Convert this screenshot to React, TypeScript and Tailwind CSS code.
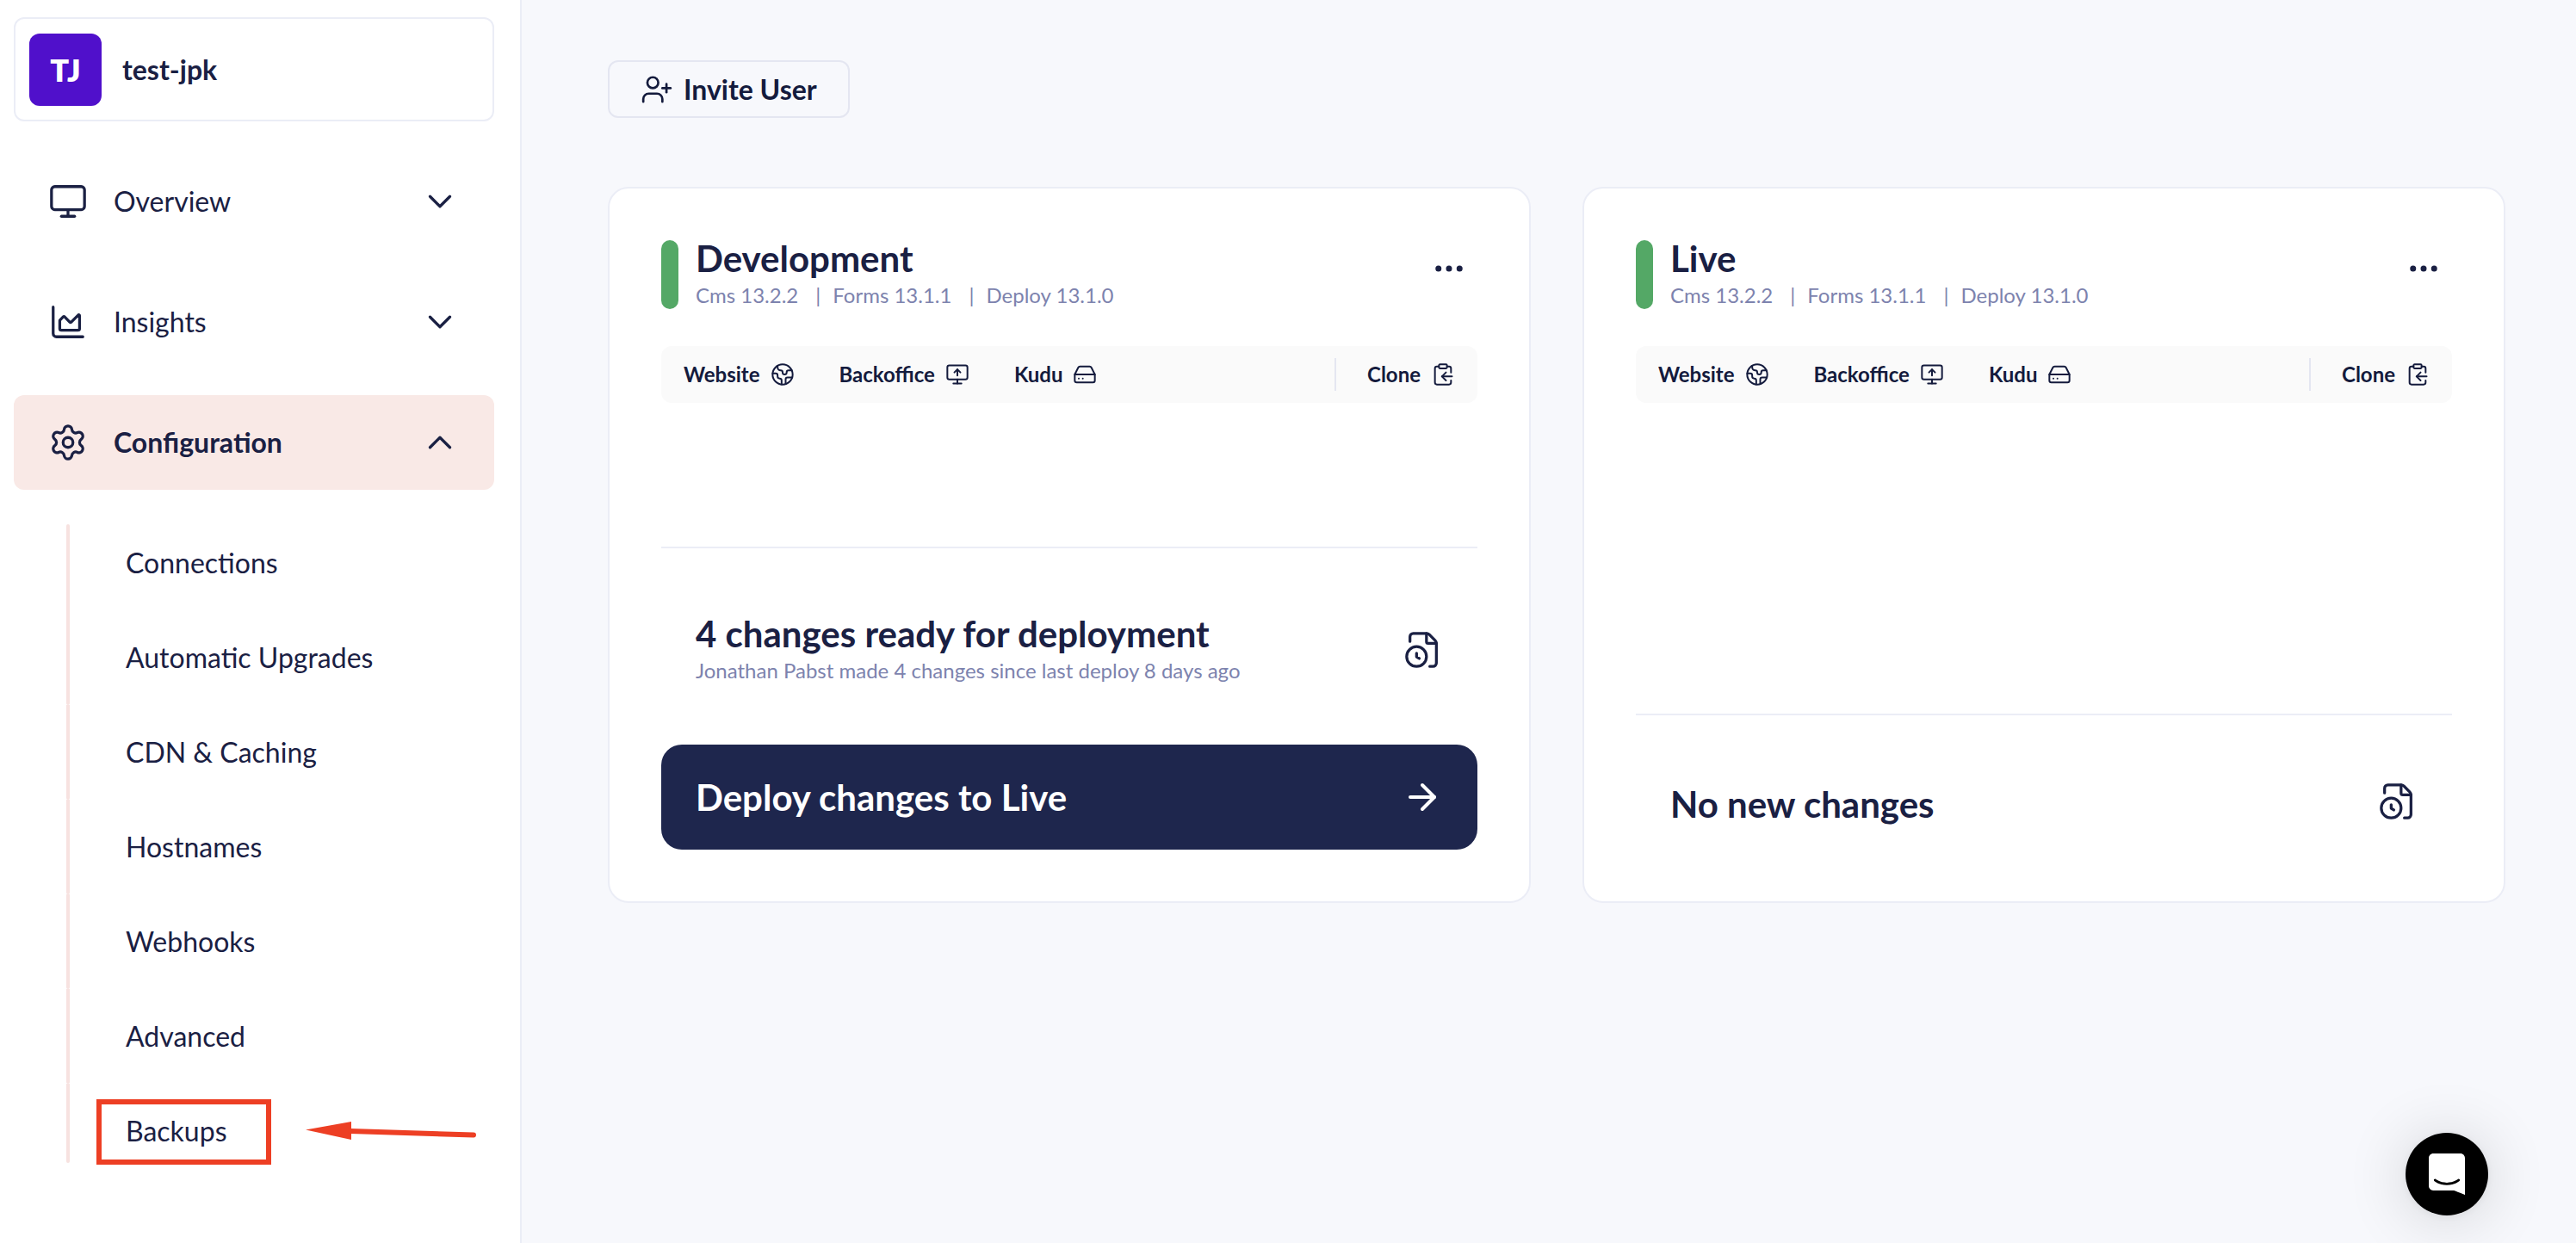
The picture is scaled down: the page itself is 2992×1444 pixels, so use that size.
import type { ReactNode } from "react";
import {
  ArrowRight,
  ChartArea,
  ChevronDown,
  ChevronUp,
  ClipboardCopy,
  Earth,
  Ellipsis,
  FileClock,
  HardDrive,
  Monitor,
  MonitorUp,
  Settings,
  UserPlus,
  type LucideIcon,
} from "lucide-react";

type Section = { label: string; icon: LucideIcon; open?: boolean };

const sections: Section[] = [
  { label: "Overview", icon: Monitor },
  { label: "Insights", icon: ChartArea },
  { label: "Configuration", icon: Settings, open: true },
];

const configLinks = [
  "Connections",
  "Automatic Upgrades",
  "CDN & Caching",
  "Hostnames",
  "Webhooks",
  "Advanced",
  "Backups",
];

function NavSection({ label, icon: Icon, open }: Section) {
  const Chevron = open ? ChevronUp : ChevronDown;
  return (
    <button
      type="button"
      aria-expanded={!!open}
      className={`flex h-[110px] w-full items-center gap-[30px] rounded-xl px-10 text-left ${
        open ? "bg-[#f9e9e6] font-bold" : ""
      }`}
    >
      <Icon size={46} strokeWidth={1.7} />
      <span className="flex-1">{label}</span>
      <Chevron size={46} strokeWidth={1.7} />
    </button>
  );
}

/* Red frame and arrow that point out the Backups entry. */
function BackupsCallout() {
  return (
    <>
      <span className="pointer-events-none absolute top-[18px] left-[35px] h-[76px] w-[203px] border-[6px] border-[#ed3f24]" />
      <svg
        viewBox="0 0 200 24"
        className="pointer-events-none absolute top-[43px] left-[278px] h-6 w-[200px]"
        aria-hidden="true"
      >
        <path d="M0 10.5 53 1V22z" fill="#ed3f24" />
        <path d="M52 12 195 16.500" stroke="#ed3f24" strokeWidth="6" strokeLinecap="round" />
      </svg>
    </>
  );
}

function Sidebar() {
  return (
    <aside className="w-[606px] shrink-0 border-r-2 border-[#ebedf6] bg-white pt-5 pr-[30px] pl-4">
      <div className="flex h-[121px] items-center gap-6 rounded-xl border-2 border-[#ebedf6] px-4">
        <div className="flex size-[84px] items-center justify-center rounded-xl bg-[#5010cb] text-4xl font-extrabold text-white">
          TJ
        </div>
        <span className="font-bold">test-jpk</span>
      </div>
      <nav className="mt-[38px] flex flex-col gap-[30px]">
        {sections.map((s) => (
          <NavSection key={s.label} {...s} />
        ))}
        <ul className="ml-[61px]">
          {configLinks.map((label) => (
            <li key={label} className="group relative flex h-[110px] items-center">
              <span className="w-1 self-stretch rounded-b-xs bg-[#f7e2e0] group-first:mt-[10px] group-first:rounded-t-xs group-first:rounded-b-none group-last:mb-[18px]" />
              <a href="#" className="pl-[65px]">
                {label}
              </a>
              {label === "Backups" && <BackupsCallout />}
            </li>
          ))}
        </ul>
      </nav>
    </aside>
  );
}

function ToolLink({ label, icon: Icon }: { label: string; icon: LucideIcon }) {
  return (
    <a href="#" className="flex items-center gap-3">
      {label}
      <Icon size={28} strokeWidth={1.7} />
    </a>
  );
}

function EnvironmentCard({ name, children }: { name: string; children: ReactNode }) {
  return (
    <section className="flex flex-col rounded-3xl border-2 border-[#ebedf6] bg-white p-[60px]">
      <header className="flex h-20 items-start">
        <span className="h-20 w-5 rounded-full bg-[#54a866]" />
        <div className="ml-5 flex-1">
          <h2 className="text-[42px] leading-[42px] font-bold">{name}</h2>
          <p className="flex text-2xl leading-[44px] text-[#7d83ae]">
            <span className="pr-5">Cms 13.2.2</span>
            <span className="pr-3.5">|</span>
            <span className="pr-5">Forms 13.1.1</span>
            <span className="pr-3.5">|</span>
            <span>Deploy 13.1.0</span>
          </p>
        </div>
        <button type="button" aria-label={`${name} options`} className="mt-3 mr-3">
          <Ellipsis size={42} strokeWidth={2} />
        </button>
      </header>
      <div className="mt-[43px] flex h-[66px] items-center gap-[52px] rounded-xl bg-[#fafafa] px-[26px] text-2xl font-bold text-[#141b3d]">
        <ToolLink label="Website" icon={Earth} />
        <ToolLink label="Backoffice" icon={MonitorUp} />
        <ToolLink label="Kudu" icon={HardDrive} />
        <div className="ml-auto flex h-[38px] items-center border-l-2 border-[#e4e6f1] pl-9">
          <button type="button" className="flex items-center gap-3">
            Clone
            <ClipboardCopy size={28} strokeWidth={1.7} />
          </button>
        </div>
      </div>
      <div className="min-h-[167px] flex-1" />
      {children}
    </section>
  );
}

function Changes({ title, detail }: { title: string; detail?: string }) {
  return (
    <div className="flex h-[86px] items-center justify-between px-10">
      <div>
        <h3 className="text-[42px] leading-[42px] font-bold">{title}</h3>
        {detail && <p className="text-2xl leading-[44px] text-[#7d83ae]">{detail}</p>}
      </div>
      <button type="button" aria-label="Change history" className="mb-1.5">
        <FileClock size={46} strokeWidth={1.7} />
      </button>
    </div>
  );
}

export default function App() {
  return (
    <div className="flex min-h-screen bg-[#f7f8fc] font-['Lato',sans-serif] text-[32px] leading-10 text-[#1a2043]">
      <Sidebar />
      <main className="flex-1 pt-[70px] pr-[82px] pl-[100px]">
        <button
          type="button"
          className="flex h-[67px] items-center gap-3 rounded-xl border-2 border-[#e4e6f1] px-9 font-bold text-[#141b3d]"
        >
          <UserPlus size={38} strokeWidth={1.7} />
          Invite User
        </button>
        <div className="mt-20 grid grid-cols-2 gap-[60px]">
          <EnvironmentCard name="Development">
            <div className="border-t-2 border-[#ebedf6] pt-[78px] pb-16">
              <Changes
                title="4 changes ready for deployment"
                detail="Jonathan Pabst made 4 changes since last deploy 8 days ago"
              />
            </div>
            <button
              type="button"
              className="flex h-[122px] items-center justify-between rounded-3xl bg-[#1e264d] px-10 text-[42px] font-bold text-white"
            >
              Deploy changes to Live
              <ArrowRight size={48} strokeWidth={2} />
            </button>
          </EnvironmentCard>
          <EnvironmentCard name="Live">
            <div className="border-t-2 border-[#ebedf6] pt-[60px] pb-2.5">
              <Changes title="No new changes" />
            </div>
          </EnvironmentCard>
        </div>
      </main>
      <button
        type="button"
        aria-label="Open chat"
        className="fixed right-[102px] bottom-8 flex size-24 items-center justify-center rounded-full bg-black shadow-[0_4px_72px_rgba(0,0,0,0.16),0_2px_12px_rgba(0,0,0,0.06)]"
      >
        <svg viewBox="0 0 28 32" className="h-12 w-[42px]" fill="#fff" aria-hidden="true">
          <path d="M28 32s-4.714-1.855-8.527-3.340H3.437C1.540 28.660 0 27.026 0 25.013V3.644C0 1.633 1.540 0 3.437 0h21.125c1.898 0 3.437 1.632 3.437 3.645v18.404H28V32zm-4.139-11.982a.88.88 0 00-1.292-.105c-.03.026-3.015 2.681-8.570 2.681-5.486 0-8.517-2.636-8.571-2.684a.88.88 0 00-1.290.107 1.010 1.010 0 00-.219.708.992.992 0 00.318.664c.142.128 3.537 3.150 9.762 3.150 6.226 0 9.621-3.022 9.763-3.150a.992.992 0 00.317-.664 1.010 1.010 0 00-.218-.707z" />
        </svg>
      </button>
    </div>
  );
}
